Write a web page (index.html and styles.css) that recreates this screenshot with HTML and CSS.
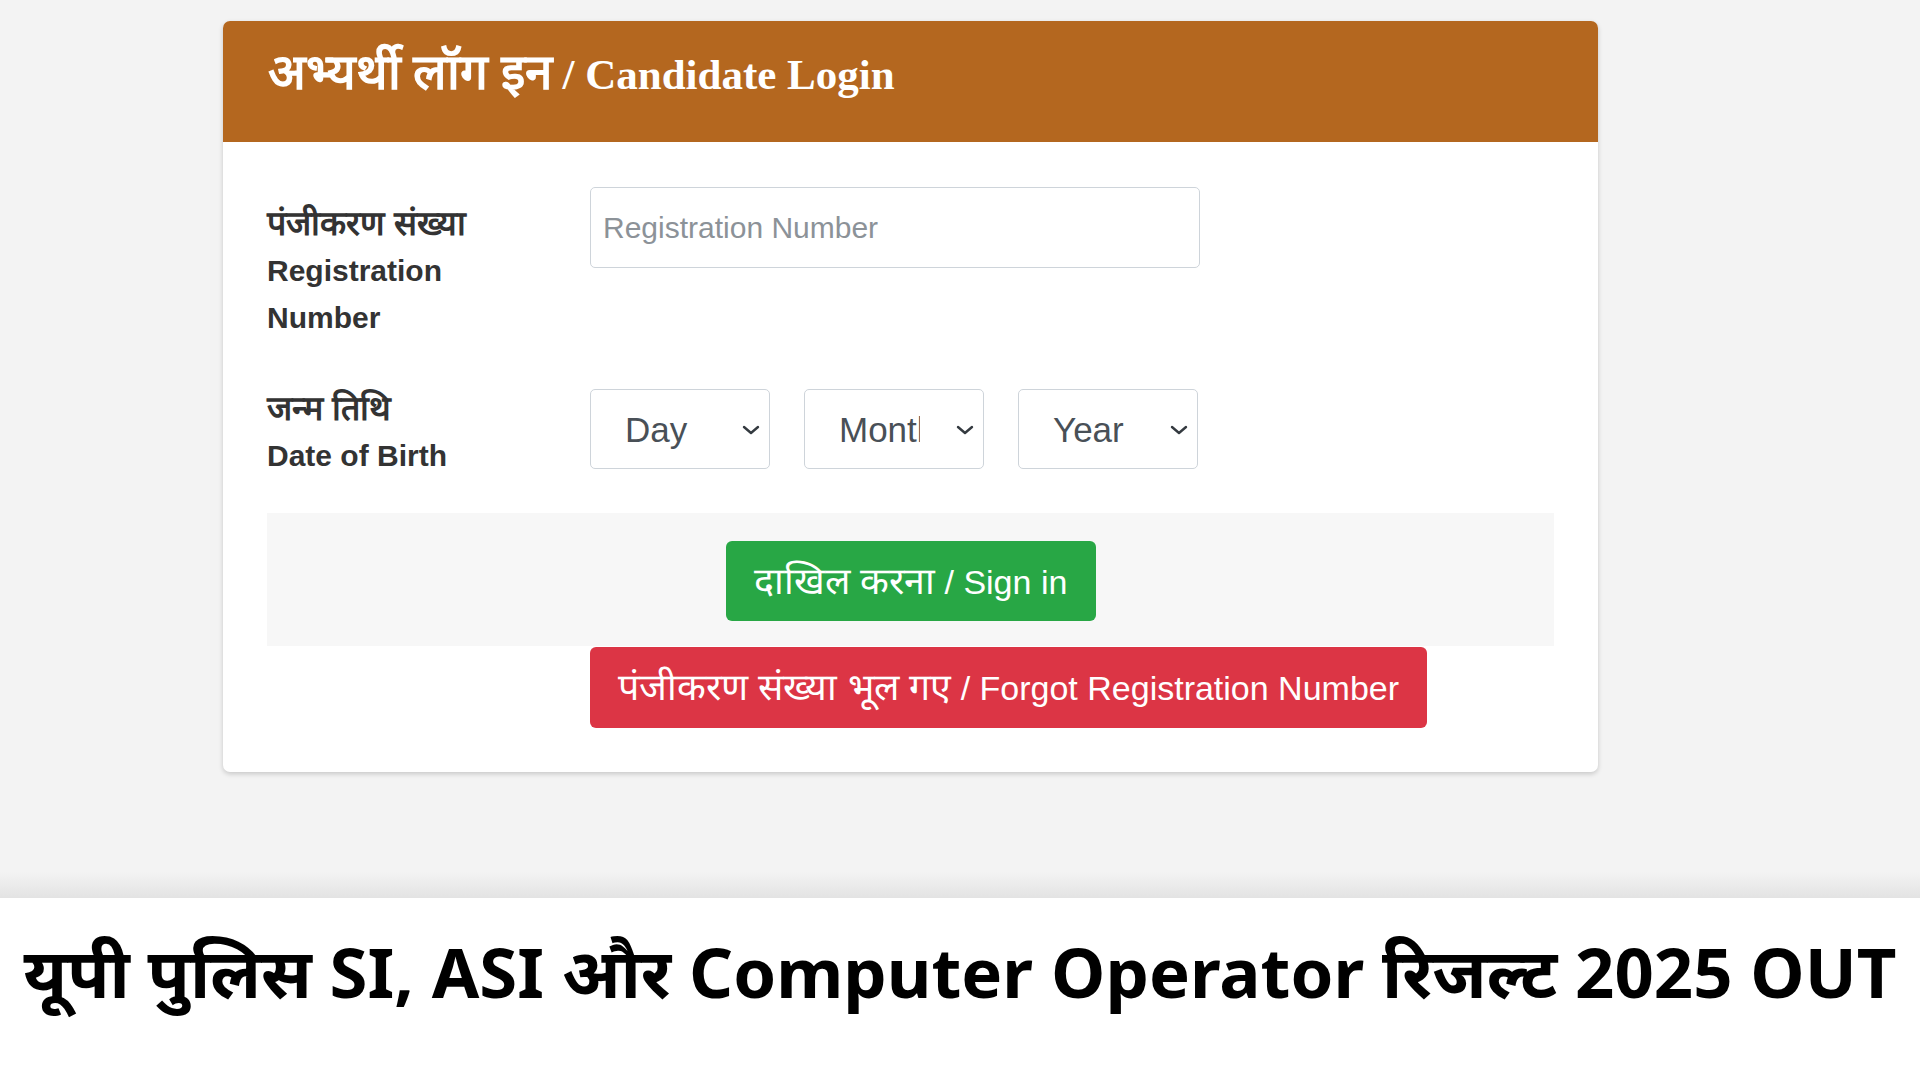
FILE: index.html
```html
<!DOCTYPE html>
<html lang="hi">
<head>
<meta charset="utf-8">
<title>Candidate Login</title>
<link rel="stylesheet" href="styles.css">
</head>
<body>
<div class="stage">
  <div class="card">
    <div class="card-header">
      <h2 class="title"><span class="title-hi">अभ्यर्थी लॉग इन</span> / Candidate Login</h2>
    </div>
    <div class="card-body">
      <div class="row row-reg">
        <label class="lbl"><span class="lbl-hi">पंजीकरण संख्या</span><span class="lbl-en">Registration Number</span></label>
        <input class="field" type="text" placeholder="Registration Number">
      </div>
      <div class="row row-dob">
        <label class="lbl"><span class="lbl-hi">जन्म तिथि</span><span class="lbl-en">Date of Birth</span></label>
        <div class="selects">
          <div class="sel-wrap">
            <select class="sel"><option>Day</option></select>
            <svg class="chev" viewBox="0 0 18 10"><polyline points="2,2 9,8 16,2" fill="none" stroke="#343a40" stroke-width="2.4" stroke-linecap="round" stroke-linejoin="round"/></svg>
          </div>
          <div class="sel-wrap">
            <select class="sel"><option>Month</option></select>
            <svg class="chev" viewBox="0 0 18 10"><polyline points="2,2 9,8 16,2" fill="none" stroke="#343a40" stroke-width="2.4" stroke-linecap="round" stroke-linejoin="round"/></svg>
          </div>
          <div class="sel-wrap">
            <select class="sel"><option>Year</option></select>
            <svg class="chev" viewBox="0 0 18 10"><polyline points="2,2 9,8 16,2" fill="none" stroke="#343a40" stroke-width="2.4" stroke-linecap="round" stroke-linejoin="round"/></svg>
          </div>
        </div>
      </div>
      <div class="actions">
        <button class="btn btn-green" type="button"><span class="btn-hi">दाखिल करना</span> / Sign in</button>
      </div>
      <button class="btn btn-red" type="button"><span class="btn-hi">पंजीकरण संख्या भूल गए</span> / Forgot Registration Number</button>
    </div>
  </div>
</div>
<div class="caption">
  <h1 class="headline">यूपी पुलिस SI, ASI और Computer Operator रिजल्ट 2025 OUT</h1>
</div>
</body>
</html>
```
FILE: styles.css
```css
html, body {
  margin: 0;
  padding: 0;
}
body {
  font-family: "Liberation Sans", Arial, sans-serif;
  background: #ffffff;
  width: 1920px;
  overflow: hidden;
}
.stage {
  height: 898px;
  box-sizing: border-box;
  padding: 21px 0 0 223px;
  background: linear-gradient(to bottom, #f3f3f3 0, #f3f3f3 872px, #e3e3e3 898px);
}
.card {
  width: 1375px;
  background: #ffffff;
  border-radius: 7px;
  box-shadow: 0 2px 5px rgba(0, 0, 0, 0.18);
  overflow: hidden;
}
.card-header {
  height: 121px;
  box-sizing: border-box;
  background: #b4671f;
  padding: 27px 45px 0;
}
.title {
  margin: 0;
  font-family: "Liberation Serif", "Times New Roman", serif;
  font-weight: 700;
  font-size: 43px;
  line-height: 50px;
  color: #ffffff;
  white-space: nowrap;
}
.title-hi {
  font-size: 49.5px;
}
.card-body {
  padding: 45px 44px 44px;
}
.row {
  display: grid;
  grid-template-columns: 323px 610px;
  align-items: start;
}
.lbl {
  display: block;
  width: 230px;
  padding-top: 13px;
  font-weight: 700;
  font-size: 30px;
  line-height: 47px;
  color: #333333;
}
.lbl-hi {
  display: block;
  font-size: 34px;
  white-space: nowrap;
}
.lbl-en {
  display: block;
  width: 200px;
}
.row-dob {
  margin-top: 44px;
}
.row-dob .lbl {
  padding-top: 0;
}
.field {
  width: 610px;
  height: 81px;
  box-sizing: border-box;
  border: 1px solid #ced4da;
  border-radius: 5px;
  padding: 0 12px;
  font-family: "Liberation Sans", Arial, sans-serif;
  font-size: 30px;
  color: #495057;
  background: #ffffff;
  outline: none;
}
.field::placeholder {
  color: #8c9298;
}
.selects {
  display: flex;
  gap: 34px;
  padding-top: 4px;
}
.sel-wrap {
  position: relative;
  width: 180px;
  height: 80px;
}
.sel {
  appearance: none;
  -webkit-appearance: none;
  width: 100%;
  height: 100%;
  box-sizing: border-box;
  border: 1px solid #ced4da;
  border-radius: 5px;
  background: #ffffff;
  padding: 0 63px 0 34px;
  font-family: "Liberation Sans", Arial, sans-serif;
  font-size: 35px;
  color: #495057;
  outline: none;
}
.chev {
  position: absolute;
  right: 10px;
  top: 36px;
  width: 18px;
  height: 10px;
  pointer-events: none;
}
.actions {
  margin-top: 34px;
  background: #f7f7f7;
  padding: 28px 0 25px;
  display: flex;
  justify-content: center;
}
.btn {
  border: 0;
  border-radius: 6px;
  color: #ffffff;
  font-family: "Liberation Sans", Arial, sans-serif;
  font-size: 34px;
  line-height: 40px;
  padding: 0 20px;
  cursor: pointer;
  white-space: nowrap;
}
.btn-hi {
  font-size: 37.5px;
}
.btn-green {
  background: #28a745;
  width: 370px;
  height: 80px;
}
.btn-red {
  display: block;
  background: #dc3545;
  width: 837px;
  height: 81px;
  margin: 1px 0 0 323px;
}
.caption {
  height: 182px;
  background: #ffffff;
  box-sizing: border-box;
  padding-top: 25px;
  display: flex;
  justify-content: center;
}
.headline {
  margin: 0;
  font-family: "Noto Sans", "Open Sans", sans-serif;
  font-weight: 700;
  font-size: 68.8px;
  line-height: 96px;
  color: #000000;
  white-space: nowrap;
}
```
